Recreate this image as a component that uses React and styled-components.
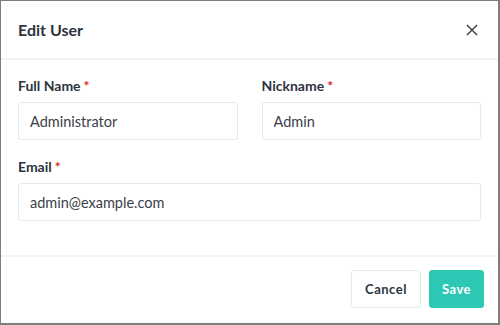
import React from "react";
import styled, { createGlobalStyle } from "styled-components";

const Global = createGlobalStyle`
  html, body {
    margin: 0;
    padding: 0;
    background: #7d7d7d;
  }
  body {
    font-family: Lato, "Noto Sans", sans-serif;
    color: #2d3440;
  }
`;

const Backdrop = styled.div`
  width: 500px;
  height: 325px;
  box-sizing: border-box;
  padding: 1px 2px 1px 1px;
`;

const Modal = styled.div`
  background: #fff;
  height: 322px;
  display: flex;
  flex-direction: column;
`;

const Header = styled.div`
  height: 57px;
  display: flex;
  align-items: center;
  justify-content: space-between;
  padding: 0 19px 0 17px;
  border-bottom: 2px solid #f2f3f5;
`;

const Title = styled.h2`
  margin: 0;
  font-size: 16px;
  font-weight: 700;
  color: #2d3440;
`;

const Close = styled.button`
  border: 0;
  background: none;
  padding: 0;
  width: 14px;
  height: 14px;
  display: flex;
  color: #444;
`;

const Body = styled.div`
  flex: 1;
  padding: 17px 17px 0 17px;
  display: flex;
  flex-direction: column;
  gap: 18px;
`;

const Row = styled.div`
  display: grid;
  grid-template-columns: ${(p) => p.cols || "1fr"};
  gap: 24px;
`;

const Field = styled.div`
  display: flex;
  flex-direction: column;
  gap: 8px;
`;

const Label = styled.label`
  font-size: 14px;
  font-weight: 700;
  color: #2d3440;
  line-height: 17px;
`;

const Star = styled.span`
  color: #e02424;
  margin-left: 3px;
`;

const Input = styled.input`
  box-sizing: border-box;
  height: 38px;
  width: 100%;
  border: 1px solid #e5e9ee;
  border-radius: 3px;
  padding: 0 11px;
  font-family: Lato, "Noto Sans", sans-serif;
  font-size: 14.5px;
  color: #3b4048;
  outline: none;
`;

const Footer = styled.div`
  border-top: 2px solid #f2f3f5;
  height: 68px;
  box-sizing: border-box;
  display: flex;
  align-items: center;
  justify-content: flex-end;
  gap: 8px;
  padding: 0 14px 2px 0;
`;

const Button = styled.button`
  height: 38px;
  box-sizing: border-box;
  border-radius: 3px;
  font-family: Lato, "Noto Sans", sans-serif;
  font-size: 13px;
  font-weight: 700;
  letter-spacing: 0.5px;
  padding: 0 ${(p) => (p.primary ? "12px" : "13px")};
  border: 1px solid ${(p) => (p.primary ? "#2cc8b4" : "#e5e9ee")};
  background: ${(p) => (p.primary ? "#2cc8b4" : "#fff")};
  color: ${(p) => (p.primary ? "#fff" : "#2d3440")};
`;

export default function App() {
  return (
    <>
      <Global />
      <Backdrop>
        <Modal>
          <Header>
            <Title>Edit User</Title>
            <Close aria-label="Close">
              <svg width="14" height="14" viewBox="0 0 14 14">
                <path d="M2 2 L12 12 M12 2 L2 12" stroke="currentColor" strokeWidth="1.5" fill="none" />
              </svg>
            </Close>
          </Header>
          <Body>
            <Row cols="1fr 1fr">
              <Field>
                <Label>Full Name<Star>*</Star></Label>
                <Input defaultValue="Administrator" />
              </Field>
              <Field>
                <Label>Nickname<Star>*</Star></Label>
                <Input defaultValue="Admin" />
              </Field>
            </Row>
            <Row>
              <Field>
                <Label>Email<Star>*</Star></Label>
                <Input defaultValue="admin@example.com" />
              </Field>
            </Row>
          </Body>
          <Footer>
            <Button>Cancel</Button>
            <Button primary>Save</Button>
          </Footer>
        </Modal>
      </Backdrop>
    </>
  );
}
